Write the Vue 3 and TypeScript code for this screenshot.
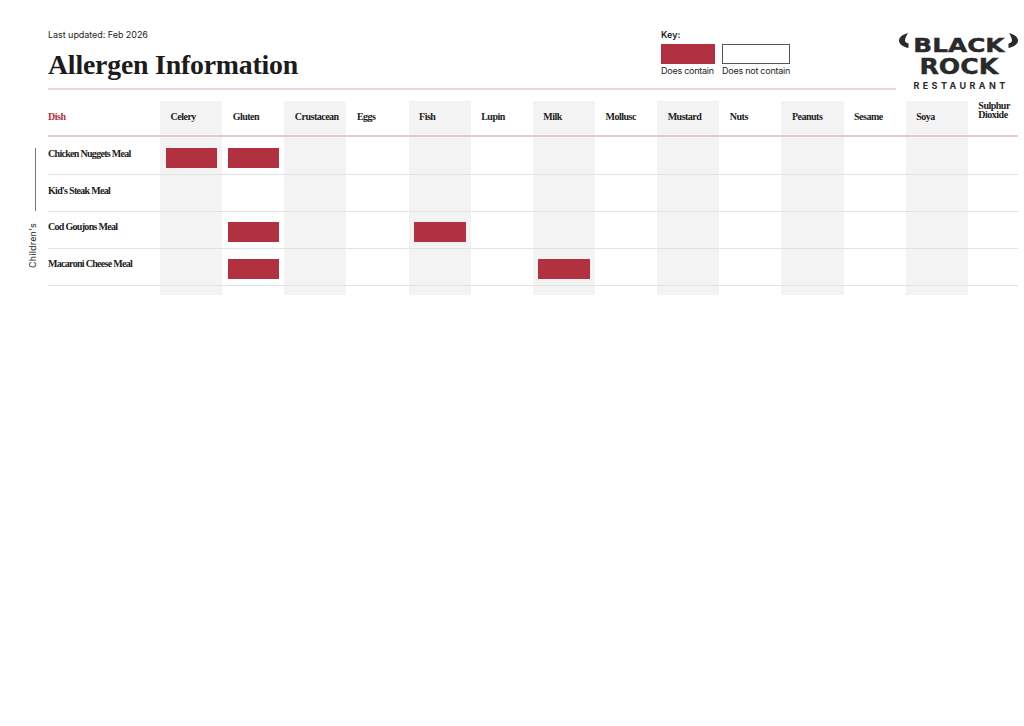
<script setup lang="ts">
const allergens: string[] = ['Celery','Gluten','Crustacean','Eggs','Fish','Lupin','Milk','Mollusc','Mustard','Nuts','Peanuts','Sesame','Soya','Sulphur Dioxide']
const dishes: { name: string; has: string[] }[] = [
  { name: 'Chicken Nuggets Meal', has: ['Celery','Gluten'] },
  { name: "Kid's Steak Meal", has: [] },
  { name: 'Cod Goujons Meal', has: ['Gluten','Fish'] },
  { name: 'Macaroni Cheese Meal', has: ['Gluten','Milk'] },
]
</script>

<template>
  <div class="page">
    <header class="head">
      <div class="head-main">
        <div class="titles">
          <p class="updated">Last updated: Feb 2026</p>
          <h1 class="title">Allergen Information</h1>
        </div>
        <div class="key">
          <p class="key-title">Key:</p>
          <div class="key-items">
            <div class="key-item">
              <span class="swatch swatch-on"></span>
              <span class="key-label">Does contain</span>
            </div>
            <div class="key-item">
              <span class="swatch swatch-off"></span>
              <span class="key-label">Does not contain</span>
            </div>
          </div>
        </div>
      </div>
      <div class="logo">
        <div class="logo-top">
          <svg class="horn" width="10" height="15" viewBox="0 0 10 15">
            <path d="M9 0 C3 1.500 0 4.500 0 7.500 C0 11 3.500 13.500 9.500 15 L9.500 10.500 C7.500 10 6 9 6 7.500 C6 5 7.500 2.500 9 0 Z" fill="#2a2a2a"/>
          </svg>
          <span class="logo-black">BLACK</span>
          <svg class="horn" width="10" height="15" viewBox="0 0 10 15">
            <path d="M1 0 C7 1.500 10 4.500 10 7.500 C10 11 6.500 13.500 0.500 15 L0.500 10.500 C2.500 10 4 9 4 7.500 C4 5 2.500 2.500 1 0 Z" fill="#2a2a2a"/>
          </svg>
        </div>
        <div class="logo-rock">ROCK</div>
        <div class="logo-rest">RESTAURANT</div>
      </div>
    </header>

    <div class="body">
      <aside class="group">
        <span class="group-line"></span>
        <span class="group-label">Children's</span>
      </aside>
      <div class="table">
        <div class="hcell dish-head">Dish</div>
        <div v-for="(a, i) in allergens" :key="a" class="hcell" :class="{ stripe: i % 2 === 0, tall: a === 'Sulphur Dioxide' }"><span class="hlabel">{{ a }}</span></div>
        <template v-for="(d, r) in dishes" :key="d.name">
          <div class="cell dish" :class="'dish-' + r">{{ d.name }}</div>
          <div v-for="(a, i) in allergens" :key="a" class="cell" :class="[{ stripe: i % 2 === 0 }, r === 0 ? 'first' : '']">
            <span v-if="d.has.includes(a)" class="mark"></span>
          </div>
        </template>
        <div class="tail"></div>
        <div v-for="(a, i) in allergens" :key="a" class="tail" :class="{ stripe: i % 2 === 0 }"></div>
      </div>
    </div>
  </div>
</template>

<style>
html, body { margin: 0; background: #fff; }
</style>

<style scoped>
.page {
  width: 1024px;
  height: 726px;
  box-sizing: border-box;
  padding: 28px 6px 0 0;
  color: #1c1c1c;
  font-family: Inter, "Liberation Sans", sans-serif;
}
.head {
  display: flex;
  margin-left: 48px;
  height: 73px;
}
.head-main {
  display: flex;
  width: 848px;
  height: 60px;
  border-bottom: 2px solid #edd3d6;
}
.titles { width: 613px; }
.updated {
  margin: 1px 0 0;
  font-size: 9px;
  line-height: 12px;
  letter-spacing: -0.05px;
}
.title {
  margin: 7px 0 0;
  font-family: "Liberation Serif", serif;
  font-weight: 700;
  font-size: 27.8px;
  line-height: 34px;
  letter-spacing: -0.2px;
}
.key { padding-top: 1px; }
.key-title {
  margin: 0 0 4px;
  font-size: 9px;
  line-height: 11px;
  font-weight: 600;
}
.key-items { display: flex; gap: 7px; }
.key-item { display: flex; flex-direction: column; gap: 1px; }
.swatch { display: block; height: 20px; box-sizing: border-box; }
.swatch-on { width: 54px; background: #b23140; }
.swatch-off { width: 68px; border: 1px solid #555; }
.key-label {
  font-size: 9px;
  line-height: 11px;
  white-space: nowrap;
  letter-spacing: -0.25px;
}
.logo {
  margin-left: 3px;
  width: 119px;
  color: #2a2a2a;
  display: flex;
  flex-direction: column;
  align-items: center;
  font-family: "DejaVu Sans", sans-serif;
  font-weight: 700;
  line-height: 1;
}
.logo-top {
  display: flex;
  align-items: flex-start;
  justify-content: space-between;
  width: 119px;
  margin-top: 5px;
}
.horn { display: block; }
.logo-black {
  font-size: 19.5px;
  line-height: 20px;
  margin-top: 3px;
  transform: scaleX(1.27);
  -webkit-text-stroke: 0.4px #2a2a2a;
}
.logo-rock {
  font-size: 21px;
  line-height: 20px;
  margin-top: 1px;
  transform: scaleX(1.2);
  -webkit-text-stroke: 0.4px #2a2a2a;
}
.logo-rest {
  font-size: 9px;
  line-height: 10px;
  margin-top: 4px;
  letter-spacing: 3.400px;
  margin-right: -5px;
  font-family: Inter, sans-serif;
  font-weight: 700;
}
.body { display: flex; }
.group {
  width: 48px;
  flex: none;
  box-sizing: border-box;
  padding-top: 47px;
  display: flex;
  flex-direction: column;
  align-items: flex-end;
}
.group-line {
  display: block;
  width: 1px;
  height: 63px;
  background: #777;
  margin-right: 12px;
}
.group-label {
  writing-mode: vertical-rl;
  transform: rotate(180deg);
  font-size: 9px;
  line-height: 11px;
  margin: 12px 10px 0 0;
  letter-spacing: 0.2px;
}
.table {
  flex: 1;
  display: grid;
  grid-template-columns: 112px repeat(13, 62.15px) 1fr;
  grid-template-rows: 36px 38px 37px 37px 37px 9px;
  font-family: "Liberation Serif", serif;
  font-weight: 700;
  font-size: 10px;
  letter-spacing: -0.5px;
}
.stripe { background: #f3f3f3; }
.hcell {
  border-bottom: 2px solid #eac6cd;
  display: flex;
  align-items: center;
  padding: 0 0 3px 10.5px;
  box-sizing: border-box;
}
.dish-head { padding-left: 0; color: #b23140; }
.hlabel { display: block; line-height: 9px; }
.tall { padding-bottom: 16px; }
.tall .hlabel { width: 36px; }
.cell {
  border-bottom: 1px solid #e2e2e2;
  box-sizing: border-box;
  padding: 9.5px 0 0 5.5px;
}
.cell.first { padding-top: 11px; }
.dish {
  line-height: 12px;
  white-space: nowrap;
  letter-spacing: -0.7px;
  padding: 9px 0 0;
}
.dish-0 { padding-top: 11px; }
.dish-1 { padding-top: 10px; }
.mark {
  display: block;
  width: 51.5px;
  height: 20px;
  background: #b23140;
}
</style>
